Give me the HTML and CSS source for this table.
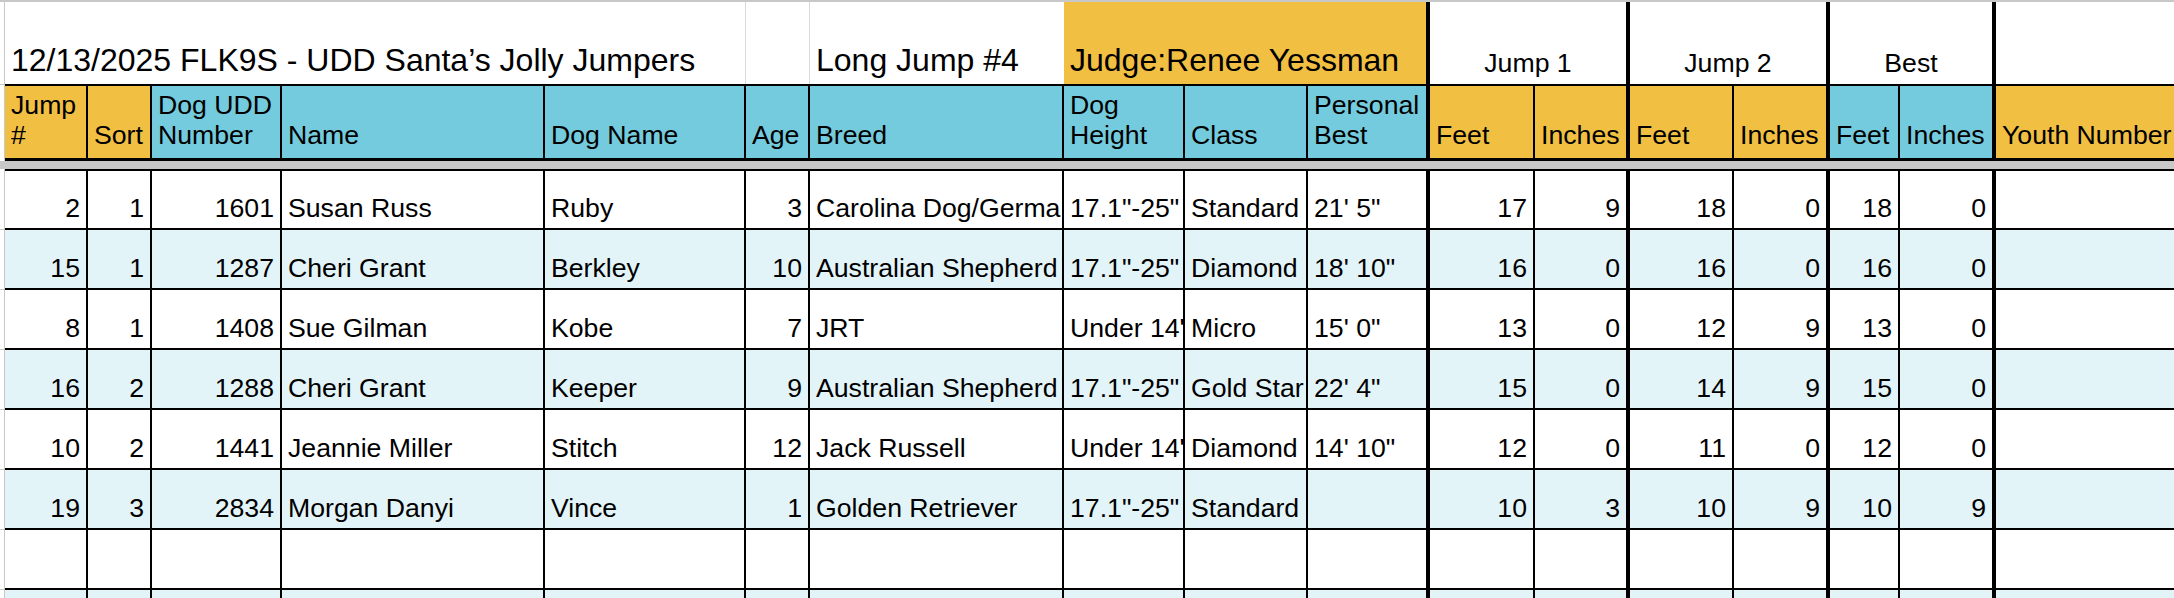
FILE: index.html
```html
<!DOCTYPE html>
<html lang="en">
<head>
<meta charset="utf-8">
<title>Long Jump #4</title>
<link rel="stylesheet" href="styles.css">
</head>
<body>
<div class="sheet">
  <div class="row row-title">
    <div class="stub"></div>
    <div class="tcell t-main">12/13/2025 FLK9S - UDD Santa’s Jolly Jumpers</div>
    <div class="tcell t-age"></div>
    <div class="tcell t-event">Long Jump #4</div>
    <div class="tcell t-judge">Judge:Renee Yessman</div>
    <div class="tcell t-group t-j1">Jump 1</div>
    <div class="tcell t-group t-j2">Jump 2</div>
    <div class="tcell t-group t-best">Best</div>
    <div class="tcell t-youth"></div>
  </div>

  <div class="row row-head">
    <div class="stub"></div>
    <div class="cell yellow">Jump<br>#</div>
    <div class="cell yellow">Sort</div>
    <div class="cell cyan">Dog UDD<br>Number</div>
    <div class="cell cyan">Name</div>
    <div class="cell cyan">Dog Name</div>
    <div class="cell cyan">Age</div>
    <div class="cell cyan">Breed</div>
    <div class="cell cyan">Dog<br>Height</div>
    <div class="cell cyan">Class</div>
    <div class="cell cyan thick">Personal<br>Best</div>
    <div class="cell yellow">Feet</div>
    <div class="cell yellow thick">Inches</div>
    <div class="cell yellow">Feet</div>
    <div class="cell yellow thick">Inches</div>
    <div class="cell cyan">Feet</div>
    <div class="cell cyan thick">Inches</div>
    <div class="cell yellow last">Youth Number</div>
  </div>

  <div class="freeze"></div>

  <div class="row row-data first">
    <div class="stub"></div>
    <div class="cell num">2</div>
    <div class="cell num">1</div>
    <div class="cell num">1601</div>
    <div class="cell">Susan Russ</div>
    <div class="cell">Ruby</div>
    <div class="cell num">3</div>
    <div class="cell">Carolina Dog/German Shepherd</div>
    <div class="cell">17.1"-25"</div>
    <div class="cell">Standard</div>
    <div class="cell thick">21' 5"</div>
    <div class="cell num">17</div>
    <div class="cell num thick">9</div>
    <div class="cell num">18</div>
    <div class="cell num thick">0</div>
    <div class="cell num">18</div>
    <div class="cell num thick">0</div>
    <div class="cell last"></div>
  </div>

  <div class="row row-data alt">
    <div class="stub"></div>
    <div class="cell num">15</div>
    <div class="cell num">1</div>
    <div class="cell num">1287</div>
    <div class="cell">Cheri Grant</div>
    <div class="cell">Berkley</div>
    <div class="cell num">10</div>
    <div class="cell">Australian Shepherd</div>
    <div class="cell">17.1"-25"</div>
    <div class="cell">Diamond</div>
    <div class="cell thick">18' 10"</div>
    <div class="cell num">16</div>
    <div class="cell num thick">0</div>
    <div class="cell num">16</div>
    <div class="cell num thick">0</div>
    <div class="cell num">16</div>
    <div class="cell num thick">0</div>
    <div class="cell last"></div>
  </div>

  <div class="row row-data">
    <div class="stub"></div>
    <div class="cell num">8</div>
    <div class="cell num">1</div>
    <div class="cell num">1408</div>
    <div class="cell">Sue Gilman</div>
    <div class="cell">Kobe</div>
    <div class="cell num">7</div>
    <div class="cell">JRT</div>
    <div class="cell">Under 14"</div>
    <div class="cell">Micro</div>
    <div class="cell thick">15' 0"</div>
    <div class="cell num">13</div>
    <div class="cell num thick">0</div>
    <div class="cell num">12</div>
    <div class="cell num thick">9</div>
    <div class="cell num">13</div>
    <div class="cell num thick">0</div>
    <div class="cell last"></div>
  </div>

  <div class="row row-data alt">
    <div class="stub"></div>
    <div class="cell num">16</div>
    <div class="cell num">2</div>
    <div class="cell num">1288</div>
    <div class="cell">Cheri Grant</div>
    <div class="cell">Keeper</div>
    <div class="cell num">9</div>
    <div class="cell">Australian Shepherd</div>
    <div class="cell">17.1"-25"</div>
    <div class="cell">Gold Star</div>
    <div class="cell thick">22' 4"</div>
    <div class="cell num">15</div>
    <div class="cell num thick">0</div>
    <div class="cell num">14</div>
    <div class="cell num thick">9</div>
    <div class="cell num">15</div>
    <div class="cell num thick">0</div>
    <div class="cell last"></div>
  </div>

  <div class="row row-data">
    <div class="stub"></div>
    <div class="cell num">10</div>
    <div class="cell num">2</div>
    <div class="cell num">1441</div>
    <div class="cell">Jeannie Miller</div>
    <div class="cell">Stitch</div>
    <div class="cell num">12</div>
    <div class="cell">Jack Russell</div>
    <div class="cell">Under 14"</div>
    <div class="cell">Diamond</div>
    <div class="cell thick">14' 10"</div>
    <div class="cell num">12</div>
    <div class="cell num thick">0</div>
    <div class="cell num">11</div>
    <div class="cell num thick">0</div>
    <div class="cell num">12</div>
    <div class="cell num thick">0</div>
    <div class="cell last"></div>
  </div>

  <div class="row row-data alt">
    <div class="stub"></div>
    <div class="cell num">19</div>
    <div class="cell num">3</div>
    <div class="cell num">2834</div>
    <div class="cell">Morgan Danyi</div>
    <div class="cell">Vince</div>
    <div class="cell num">1</div>
    <div class="cell">Golden Retriever</div>
    <div class="cell">17.1"-25"</div>
    <div class="cell">Standard</div>
    <div class="cell thick"></div>
    <div class="cell num">10</div>
    <div class="cell num thick">3</div>
    <div class="cell num">10</div>
    <div class="cell num thick">9</div>
    <div class="cell num">10</div>
    <div class="cell num thick">9</div>
    <div class="cell last"></div>
  </div>

  <div class="row row-data">
    <div class="stub"></div>
    <div class="cell"></div>
    <div class="cell"></div>
    <div class="cell"></div>
    <div class="cell"></div>
    <div class="cell"></div>
    <div class="cell"></div>
    <div class="cell"></div>
    <div class="cell"></div>
    <div class="cell"></div>
    <div class="cell thick"></div>
    <div class="cell"></div>
    <div class="cell thick"></div>
    <div class="cell"></div>
    <div class="cell thick"></div>
    <div class="cell"></div>
    <div class="cell thick"></div>
    <div class="cell last"></div>
  </div>

  <div class="row row-data alt">
    <div class="stub"></div>
    <div class="cell"></div>
    <div class="cell"></div>
    <div class="cell"></div>
    <div class="cell"></div>
    <div class="cell"></div>
    <div class="cell"></div>
    <div class="cell"></div>
    <div class="cell"></div>
    <div class="cell"></div>
    <div class="cell thick"></div>
    <div class="cell"></div>
    <div class="cell thick"></div>
    <div class="cell"></div>
    <div class="cell thick"></div>
    <div class="cell"></div>
    <div class="cell thick"></div>
    <div class="cell last"></div>
  </div>
</div>
</body>
</html>
```

FILE: styles.css
```css
:root {
  --cols: 5px 83px 64px 130px 263px 201px 64px 254px 121px 123px 122px 105px 95px 104px 96px 70px 96px 1fr;
  --yellow: #f1bf42;
  --cyan: #74cbdd;
  --alt: #e3f4f9;
  --grid: #c8c8c8;
}

html, body {
  margin: 0;
  padding: 0;
  background: #fff;
}

body {
  width: 2174px;
  height: 598px;
  overflow: hidden;
  font-family: "Liberation Sans", Arial, sans-serif;
  color: #000;
}

.sheet {
  width: 2174px;
}

.row {
  display: grid;
  grid-template-columns: var(--cols);
}

.stub {
  box-sizing: border-box;
  border-right: 1px solid var(--grid);
}

/* title row */
.row-title {
  box-sizing: border-box;
  height: 84px;
  border-top: 2px solid var(--grid);
}

.tcell {
  box-sizing: border-box;
  display: flex;
  align-items: flex-end;
  overflow: hidden;
  white-space: nowrap;
  padding: 0 6px 5px;
  font-size: 32px;
  line-height: 36.8px;
}

.t-main {
  grid-column: 2 / 7;
  border-right: 1px solid #dadada;
}

.t-age {
  grid-column: 7 / 8;
  border-right: 1px solid #dadada;
}

.t-event {
  grid-column: 8 / 9;
}

.t-judge {
  grid-column: 9 / 12;
  background: var(--yellow);
  border-right: 4px solid #000;
}

.t-group {
  justify-content: center;
  font-size: 26.67px;
  line-height: 30.67px;
  border-right: 4px solid #000;
}

.t-j1 { grid-column: 12 / 14; }
.t-j2 { grid-column: 14 / 16; }
.t-best { grid-column: 16 / 18; }
.t-youth { grid-column: 18 / 19; }

/* generic cell */
.cell {
  box-sizing: border-box;
  display: flex;
  align-items: flex-end;
  overflow: hidden;
  white-space: nowrap;
  padding: 0 6px 4px;
  font-size: 26.67px;
  line-height: 30.67px;
  border-right: 2px solid #000;
}

.cell.thick {
  border-right-width: 4px;
}

.cell.last {
  border-right: none;
}

.cell.num {
  justify-content: flex-end;
}

/* header row */
.row-head {
  height: 77px;
}

.row-head .cell {
  border-top: 2px solid #000;
  border-bottom: 3px solid #000;
  padding-bottom: 7px;
}

.row-head .stub {
  border-top: 1px solid var(--grid);
}

.yellow { background: var(--yellow); }
.cyan { background: var(--cyan); }

.freeze {
  height: 8px;
  background: var(--grid);
}

/* data rows */
.row-data {
  height: 60px;
}

.row-data.first {
  height: 61px;
}

.row-data .cell {
  border-bottom: 2px solid #000;
}

.row-data.first .cell {
  border-top: 2px solid #000;
}

.row-data .stub {
  border-bottom: 1px solid var(--grid);
}

.row-data.alt .cell {
  background: var(--alt);
}
```
